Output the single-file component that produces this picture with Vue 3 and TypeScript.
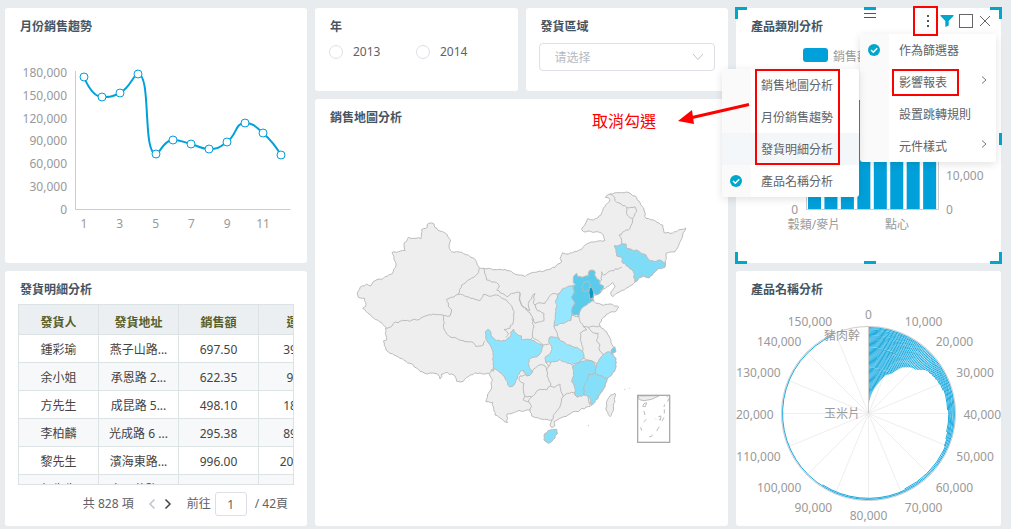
<script setup lang="ts">
import { ref } from 'vue'

type Pt = [number, number]

const months: Pt[] = [
  [84, 77], [102, 97], [120, 93], [138, 74], [156, 154], [173, 140],
  [191, 144], [209, 149], [227, 142], [245, 123], [263, 133], [281, 155],
]
const salesTicks = ['180,000', '150,000', '120,000', '90,000', '60,000', '30,000', '0']
const monthTicks = ['1', '3', '5', '7', '9', '11']

const between = (v: number, a: number, b: number) => Math.min(Math.max(v, Math.min(a, b)), Math.max(a, b))

// Smooth line whose control points never leave the span of their segment
function smoothLine(pts: Pt[]): string {
  const before: Pt[] = []
  const after: Pt[] = []
  pts.forEach((p, i) => {
    const prev = pts[i - 1]
    const next = pts[i + 1]
    if (!prev || !next) {
      before.push(p)
      after.push(p)
      return
    }
    const d0 = Math.hypot(p[0] - prev[0], p[1] - prev[1])
    const d1 = Math.hypot(next[0] - p[0], next[1] - p[1])
    const k = (0.5 * d1) / (d0 + d1)
    const a = [0, 1].map((n) => between(p[n] + (next[n] - prev[n]) * k, p[n], next[n]))
    const b = [0, 1].map((n) => between(p[n] - ((a[n] - p[n]) * d0) / d1, p[n], prev[n]))
    const c = [0, 1].map((n) => p[n] + ((p[n] - b[n]) * d1) / d0)
    before.push([b[0], b[1]])
    after.push([c[0], c[1]])
  })
  return pts
    .map((p, i) => (i === 0 ? `M${p}` : `C${after[i - 1]} ${before[i]} ${p}`))
    .join(' ')
}
const salesPath = smoothLine(months)

const columns = ['發貨人', '發貨地址', '銷售額', '運費']
const rows = [
  ['鍾彩瑜', '燕子山路...', '697.50', '39.92'],
  ['余小姐', '承恩路 2...', '622.35', '9.21'],
  ['方先生', '成昆路 5...', '498.10', '18.53'],
  ['李柏麟', '光成路 6 ...', '295.38', '89.16'],
  ['黎先生', '濱海東路...', '996.00', '208.58'],
  ['胡先生', '大明花路...', '320.00', '45.20'],
]

const year = ref('')
const area = ref('')
const page = ref('1')

// Map geometry
const parse = (s: string): Pt[] => s.trim().split(/\s+/).map((p) => p.split(',').map(Number) as Pt)

// Breaks long edges into small irregular steps; the same edge always gives the same steps
function rough(s: string, closed: boolean): string {
  const pts = parse(s)
  if (closed) pts.push(pts[0])
  let d = `M${pts[0]}`
  for (let i = 1; i < pts.length; i++) {
    const flip = pts[i - 1][0] > pts[i][0]
    const a = flip ? pts[i] : pts[i - 1]
    const b = flip ? pts[i - 1] : pts[i]
    const len = Math.hypot(b[0] - a[0], b[1] - a[1])
    const n = Math.max(1, Math.round(len / 7))
    const mid: Pt[] = []
    for (let j = 1; j < n; j++) {
      const h = Math.sin(a[0] * 12.9 + a[1] * 7.3 + b[0] * 3.1 + j * 41.7) * 4375.5
      const o = (h - Math.floor(h) - 0.5) * 5
      mid.push([
        Math.round(a[0] + ((b[0] - a[0]) * j) / n - ((b[1] - a[1]) / len) * o),
        Math.round(a[1] + ((b[1] - a[1]) * j) / n + ((b[0] - a[0]) / len) * o),
      ])
    }
    if (flip) mid.reverse()
    d += mid.map((m) => `L${m}`).join('') + `L${pts[i]}`
  }
  return closed ? d + 'Z' : d
}

const mainland = rough(
  `245,129 252,132 255,143 270,153 290,162 302,180 298,205 305,215 335,217 355,225 372,235 382,255 388,265
  402,265 435,269 465,268 490,280 525,290 550,277 585,272 615,262 635,246 630,235 638,218 655,222 695,208
  710,192 740,184 765,181 758,163 742,155 700,155 695,148 713,116 730,120 753,105 760,85 780,58 766,52
  780,42 800,38 830,36 855,48 870,68 882,90 888,115 910,120 938,135 942,158 960,160 980,155 1007,144
  998,165 988,190 975,215 948,220 946,250 944,262 925,265 910,280 898,293 880,288 868,292 855,306 840,318 810,335
  788,350 782,342 795,320 788,308 772,320 758,328 745,343 730,345 728,360 738,370 760,376 780,372
  807,382 800,392 780,397 760,412 748,430 750,438 770,455 780,475 790,500 797,515 785,522 798,535 798,560
  785,585 772,595 765,620 745,650 725,675 715,680 690,690 660,702 630,715 612,725 614,738 605,743 600,735
  606,720 575,718 545,708 540,690 530,690 500,695 472,701 472,728 460,722 435,705 430,680 428,667 408,665
  412,645 425,620 425,595 418,580 405,582 375,578 355,590 340,604 320,604 312,585 285,578 275,582 270,597
  262,582 225,580 205,568 180,550 150,535 120,520 108,510 100,483 110,480 106,460 108,442 95,428 65,410
  38,385 46,380 44,355 25,352 22,338 30,322 50,312 62,318 75,302 100,295 128,280 138,250 126,218 165,212
  162,195 175,172 213,176 215,148 232,142 235,130`,
  true,
)

const westBorders = [
  '388,265 382,282 355,300 335,315 325,343 290,358 295,375 305,390 300,408 280,406 250,402 225,408 200,420 165,422 130,430 120,442 108,445',
  '325,343 350,350 375,358 390,362 400,343 415,348 440,345 465,358 485,378 493,395 490,425 480,445 462,448 475,462 468,472',
  '402,265 410,300 440,308 448,318 440,330 470,350 485,340 510,338 508,360 515,378 530,390',
  '280,406 283,450 300,470 345,485 370,488 378,500 400,495 405,482',
  '430,575 425,568 418,580',
].map((s) => rough(s, false))

const northBorders = [
  '270,42 284,52 285,62 320,82 345,80 350,95 338,115 322,105 320,82',
  '338,115 330,145 297,165 305,180 305,190',
  '305,262 275,272 250,285 245,275 245,300 240,310',
].map((s) => rough(s, false))

const centralBorders = [
  '130,172 120,152 120,130',
  '136,178 145,186 158,200 160,235 158,262 152,268',
  '130,172 150,182 145,160 165,130 160,155 165,165 172,182 192,190 192,212 165,220 160,205',
  '165,165 180,158 195,160 215,132 238,130',
  '158,262 190,285 208,282',
  '222,230 232,250 240,272',
  '297,197 300,215 310,230 325,232 340,228 360,228',
  '272,212 276,195 297,200',
  '310,230 320,240 300,250 302,272 308,290 308,305',
  '325,232 335,245 355,250 350,268 360,285 358,300 370,312 360,325',
  '312,325 320,330 340,335 350,340',
  '198,338 206,350 200,362 195,348 178,345 160,358 152,372',
  '150,375 120,378 118,392 132,400 130,420 135,438 155,440',
  '200,362 205,385 212,408 200,420 175,420 155,440 145,455 155,470 150,480',
  '135,438 130,450 148,456',
  '206,350 212,336',
  '212,408 225,412 240,402 243,425 250,440 262,430 280,428 292,442',
  '248,440 240,470 225,490 216,510',
  '310,435 325,440 330,466',
].map((s) => rough(s, false))

const jilin = rough(
  `283,197 300,195 305,190 318,192 320,205 355,212 372,222 388,242 405,245 415,240 436,250 434,262 415,265
  400,280 388,293 370,288 358,292 345,306 340,275 325,260 305,245 305,232 290,228`,
  true,
)

const provinces = [
  {
    name: 'sichuan', fill: '#8de4fe',
    d: `16,245 25,238 33,250 33,258 50,272 75,272 92,260 92,247 100,238 110,252 125,258 125,270 150,268 190,285
    185,302 172,320 147,328 145,340 152,358 158,365 150,376 140,378 130,360 120,365 108,390 102,405 88,410
    75,385 65,370 45,355 40,362 40,320 35,295 20,270`,
  },
  {
    name: 'shanxi', fill: '#95e7ff',
    d: '283,104 278,115 283,125 275,140 285,160 277,172 276,195 272,212 245,220 222,230 226,200 230,170 228,150 238,130 250,115 268,108',
  },
  {
    name: 'hubei', fill: '#95e7ff',
    d: '208,262 230,262 240,272 270,285 290,292 308,305 312,325 300,335 275,345 250,335 240,328 225,335 198,338 195,322 213,305 215,290 208,280',
  },
  {
    name: 'jiangxi', fill: '#85dff9',
    d: '278,348 300,335 320,330 340,335 350,352 345,370 325,375 322,392 312,410 310,435 292,442 285,435 283,410 275,395 280,370',
  },
  {
    name: 'zhejiang', fill: '#8de4fe',
    d: '350,340 360,325 375,310 385,305 395,312 408,325 408,350 395,375 382,385 365,378 345,370 350,352',
  },
  {
    name: 'fujian', fill: '#85dff9',
    d: '345,370 365,378 382,385 375,410 355,440 335,465 325,440 310,435 312,410 322,392 325,375',
  },
  { name: 'shanghai', fill: '#6bd0ee', d: '395,298 404,290 408,305 395,312 393,303' },
  { name: 'hainan', fill: '#85dff9', d: '195,550 210,540 230,538 232,552 215,575 205,580 192,570' },
  {
    name: 'hebei', fill: '#5acbea',
    d: `280,82 290,70 293,80 325,78 328,62 343,62 347,80 358,90 358,100 371,108 360,128 348,134 340,128 338,145
    342,152 320,165 305,175 297,197 276,192 277,172 285,160 275,140 283,125 280,110 287,103 280,98`,
  },
  { name: 'beijing', fill: '#5acbea', d: '305,110 312,97 325,93 332,103 328,112 333,120 315,125 308,122' },
  { name: 'tianjin', fill: '#0b98c5', d: '334,110 338,118 341,130 340,143 328,145 327,125' },
  { name: 'taiwan', fill: '#eee', d: '405,430 405,455 395,490 390,500 378,480 380,455 392,435' },
].map((p) => ({ ...p, d: rough(p.d, true) }))

const seaMarks = 'M380,278l-8,3l-4,8l8,1zM372,303l3,12M379,328l-8,8M362,352l3,10M398,374l-4,6h-6M418,350l-8,13M434,283l-2,8M433,298v12M444,262l-6,-6M446,266l-3,9M432,322l-6,11M415,320l8,-2l-2,12l-4,-3M406,326l2,2'

// Radial chart
const cx = 868.5
const cy = 413.5
const outline: Pt[] = [
  [0, 0], [12, 3], [20, 9], [32, 18], [42, 24], [46, 30], [57, 36], [63, 43], [65, 48], [72, 53],
  [76, 64], [78, 72], [79, 84], [80, 102], [83, 115], [84, 172], [85, 222], [86, 343], [90, 343],
]
const angleAt = (r: number): number => {
  const i = outline.findIndex((p) => p[0] > r)
  const [r0, a0] = outline[i - 1]
  const [r1, a1] = outline[i]
  return a0 + ((a1 - a0) * (r - r0)) / (r1 - r0)
}
const ringCount = 77
const rings = Array.from({ length: ringCount }, (_, i) => {
  const r = ((i + 0.5) * 86.5) / ringCount
  const deg = angleAt(r)
  const t = (deg * Math.PI) / 180
  return `M${cx},${cy - r}A${r},${r} 0 ${deg > 180 ? 1 : 0} 1 ${cx + r * Math.sin(t)},${cy - r * Math.cos(t)}`
})
const spokes = Array.from({ length: 16 }, (_, i) => {
  const t = (i * Math.PI) / 8
  const s = Math.sin(t)
  const c = Math.cos(t)
  return {
    x: cx + 86.5 * s,
    y: cy - 86.5 * c,
    tx: cx + 95 * s,
    ty: cy - 95 * c + 5 + (c > 0.3 ? -5 : c < -0.3 ? 6 : 0),
    anchor: Math.abs(s) < 0.1 ? 'middle' : s > 0 ? 'start' : 'end',
    label: i === 0 ? '0' : `${i}0,000`,
  }
})

const bars = Array.from({ length: 8 }, (_, i) => 808 + i * 16.45)

const menu = [
  { label: '作為篩選器', checked: true, more: false },
  { label: '影響報表', checked: false, more: true },
  { label: '設置跳轉規則', checked: false, more: false },
  { label: '元件樣式', checked: false, more: true },
]
const submenu = [
  { label: '銷售地圖分析', checked: false },
  { label: '月份銷售趨勢', checked: false },
  { label: '發貨明細分析', checked: false },
  { label: '產品名稱分析', checked: true },
]
const handles = ['tl', 'tm', 'tr', 'ml', 'mr', 'bl', 'bm', 'br']
</script>

<template>
  <main class="board">
    <div class="column">
      <section class="card">
        <h2>月份銷售趨勢</h2>
        <svg class="chart" viewBox="5 34 302 229" role="img" aria-label="月份銷售趨勢">
          <path class="axis" d="M75.500,71V209.500H290.500" />
          <text v-for="(t, i) in salesTicks" :key="t" x="67" :y="77 + i * 22.8" text-anchor="end">{{ t }}</text>
          <text v-for="(t, i) in monthTicks" :key="t" :x="84 + i * 35.8" y="228" text-anchor="middle">{{ t }}</text>
          <path class="line" :d="salesPath" />
          <circle v-for="(p, i) in months" :key="i" class="dot" :cx="p[0]" :cy="p[1]" r="4" />
        </svg>
      </section>

      <section class="card">
        <h2>發貨明細分析</h2>
        <div class="table-wrap">
          <table>
            <thead>
              <tr><th v-for="c in columns" :key="c" scope="col">{{ c }}</th></tr>
            </thead>
            <tbody>
              <tr v-for="r in rows" :key="r[0]">
                <td v-for="(c, i) in r" :key="i">{{ c }}</td>
              </tr>
            </tbody>
          </table>
        </div>
        <nav class="pager" aria-label="分頁">
          <span class="total">共 828 項</span>
          <button type="button" class="step off" aria-label="上一頁" disabled>
            <svg viewBox="0 0 8 12" width="8" height="12"><path d="M6.500,1.500L2,6L6.500,10.500" /></svg>
          </button>
          <button type="button" class="step" aria-label="下一頁">
            <svg viewBox="0 0 8 12" width="8" height="12"><path d="M1.500,1.500L6,6L1.500,10.500" /></svg>
          </button>
          <label for="page">前往</label>
          <input id="page" v-model="page" type="text" />
          <span>/ 42頁</span>
        </nav>
      </section>
    </div>

    <div class="column middle">
      <div class="filters">
        <section class="card">
          <h2>年</h2>
          <div class="radios">
            <label v-for="y in ['2013', '2014']" :key="y">
              <input v-model="year" type="radio" name="year" :value="y" />{{ y }}
            </label>
          </div>
        </section>
        <section class="card">
          <h2 id="area-title">發貨區域</h2>
          <div class="select">
            <select v-model="area" aria-labelledby="area-title" lang="zh-CN">
              <option value="">请选择</option>
            </select>
            <svg viewBox="0 0 12 8" width="12" height="8"><path d="M1,1L6,6.500L11,1" /></svg>
          </div>
        </section>
      </div>

      <section class="card map-card">
        <h2>銷售地圖分析</h2>
        <svg class="chart map" viewBox="315 125 413 401" role="img" aria-label="銷售地圖分析">
          <g transform="translate(350 180) scale(0.33333)">
            <path :d="mainland" fill="#eee" />
            <path v-for="(d, i) in westBorders" :key="i" :d="d" />
            <g transform="translate(510 0)">
              <path v-for="(d, i) in northBorders" :key="i" :d="d" />
              <path :d="jilin" fill="#7fdcf7" />
            </g>
            <g transform="translate(390 210)">
              <path v-for="(d, i) in centralBorders" :key="i" :d="d" />
              <path v-for="p in provinces" :key="p.name" :d="p.d" :fill="p.fill" />
            </g>
            <g transform="translate(510 390)">
              <path d="M353,258L358,269L372,272L395,268L418,257Z" fill="#eee" />
              <rect class="sea" x="353" y="256" width="96" height="141" />
              <path :d="seaMarks" />
              <path d="M313,238h3M328,235h2M204,347h3M301,133h1" />
            </g>
          </g>
        </svg>
      </section>
    </div>

    <div class="column">
      <section class="card selected">
        <header>
          <h2>產品類別分析</h2>
          <div class="tools">
            <button type="button" class="flagged" aria-label="更多">
              <svg viewBox="0 0 14 14" width="14" height="14"><path class="solid" d="M6,1h2v2h-2zM6,6h2v2h-2zM6,11h2v2h-2z" /></svg>
            </button>
            <button type="button" aria-label="篩選">
              <svg viewBox="0 0 14 14" width="14" height="14"><path class="funnel" d="M0.500,1H13.500V2L8.700,7V11.500L5.300,13V7L0.500,2Z" /></svg>
            </button>
            <button type="button" aria-label="最大化">
              <svg viewBox="0 0 14 14" width="14" height="14"><rect x="0.500" y="0.500" width="13" height="13" /></svg>
            </button>
            <button type="button" aria-label="關閉">
              <svg viewBox="0 0 14 14" width="14" height="14"><path d="M2,2L12,12M12,2L2,12" /></svg>
            </button>
          </div>
        </header>
        <svg class="chart" viewBox="736 34 265 229" role="img" aria-label="產品類別分析">
          <rect class="bar" x="803" y="48" width="25" height="14" rx="3" />
          <text x="833" y="61">銷售額</text>
          <rect v-for="x in bars" :key="x" class="bar" :x="x" y="100" width="13" height="109" />
          <path class="axis" d="M806.500,100V209.500H938.500V100" />
          <text x="798" y="214" text-anchor="end">0</text>
          <text x="946" y="214">0</text>
          <text x="946" y="180">10,000</text>
          <text x="814" y="229" text-anchor="middle">穀類/麥片</text>
          <text x="897" y="229" text-anchor="middle">點心</text>
        </svg>
        <i v-for="h in handles" :key="h" class="handle" :class="h"></i>
        <i class="grip"></i>

        <ul class="menu main-menu">
          <li v-for="m in menu" :key="m.label">
            <button type="button">
              <span class="mark">
                <svg v-if="m.checked" viewBox="0 0 12 12" width="12" height="12"><circle cx="6" cy="6" r="6" /><path d="M3,6L5.300,8.300L9.200,4.200" /></svg>
              </span>
              <span class="name" :class="{ boxed: m.label === '影響報表' }">{{ m.label }}</span>
              <svg v-if="m.more" class="more" viewBox="0 0 6 8" width="6" height="8"><path d="M1,0.500L5,4L1,7.500" /></svg>
            </button>
          </li>
        </ul>

        <ul class="menu sub-menu">
          <li v-for="(m, i) in submenu" :key="m.label">
            <button type="button" :class="{ hover: i === 2 }">
              <span class="mark">
                <svg v-if="m.checked" viewBox="0 0 12 12" width="12" height="12"><circle cx="6" cy="6" r="6" /><path d="M3,6L5.300,8.300L9.200,4.200" /></svg>
              </span>
              <span class="name">{{ m.label }}</span>
            </button>
          </li>
        </ul>
        <div class="frame"></div>
        <div class="callout">
          <span>取消勾選</span>
          <svg viewBox="0 0 74 24" width="74" height="24"><path class="shaft" d="M13,17L72,3.500" /><path class="tip" d="M1,20L15,9L17,23Z" /></svg>
        </div>
      </section>

      <section class="card">
        <h2>產品名稱分析</h2>
        <svg class="chart" viewBox="736 297 265 229" role="img" aria-label="產品名稱分析">
          <line v-for="s in spokes" :key="s.label" class="spoke" :x1="cx" :y1="cy" :x2="s.x" :y2="s.y" />
          <circle class="rim" :cx="cx" :cy="cy" r="87" />
          <path v-for="(d, i) in rings" :key="i" class="ring" :d="d" />
          <path class="axis" :d="`M${cx},${cy}V326`" />
          <text v-for="s in spokes" :key="s.label" :x="s.tx" :y="s.ty" :text-anchor="s.anchor">{{ s.label }}</text>
          <text x="860" y="340" text-anchor="end">豬肉幹</text>
          <text x="860" y="418" text-anchor="end">玉米片</text>
        </svg>
      </section>
    </div>
  </main>
</template>

<style>
body {
  margin: 0;
  background: #e8ecef;
}
</style>

<style scoped>
.board {
  box-sizing: border-box;
  display: grid;
  grid-template-columns: 302fr 413fr 265fr;
  gap: 8px;
  height: 100vh;
  padding: 8px 10px 3px 5px;
  background: #e8ecef;
  color: #606266;
  font: 12px/16px "Noto Sans", "Noto Sans CJK TC", sans-serif;
}
.column {
  display: grid;
  grid-template-rows: repeat(2, minmax(0, 1fr));
  grid-template-columns: minmax(0, 1fr);
  gap: 8px;
  min-width: 0;
  min-height: 0;
}
.middle {
  grid-template-rows: 83px minmax(0, 1fr);
}
.filters {
  display: grid;
  grid-template-columns: 1fr 1fr;
  gap: 8px;
}
.card {
  display: flex;
  flex-direction: column;
  min-width: 0;
  min-height: 0;
  border-radius: 3px;
  background: #fff;
}
h2 {
  flex: none;
  margin: 12px 15px 0;
  color: #465461;
  font-size: 12px;
  font-weight: 600;
  line-height: 14px;
}
button {
  padding: 0;
  border: 0;
  background: none;
  color: inherit;
  font: inherit;
}
svg {
  display: block;
  fill: none;
}
.chart {
  flex: 1 1 0;
  width: 100%;
  min-height: 0;
}
.chart text {
  fill: #999;
  font-size: 12px;
}
.axis {
  stroke: #ccc;
}
.line {
  stroke: #00a0db;
  stroke-width: 2;
}
.dot {
  fill: #fff;
  stroke: #00a0db;
}
.bar {
  fill: #00a0db;
}
.spoke {
  stroke: #eee;
}
.rim {
  stroke: #ccc;
}
.ring {
  stroke: #00a0db;
  stroke-width: 0.9;
}
.map path {
  stroke: #bbb;
  stroke-width: 3;
  stroke-linejoin: round;
}
.map .sea {
  stroke: #aaa;
  stroke-width: 4;
}

.table-wrap {
  flex: 1 1 0;
  min-height: 0;
  margin: 7px 13px 0;
  overflow: hidden;
  border: 1px solid #dbe3e5;
}
table {
  width: 320px;
  table-layout: fixed;
  border-collapse: separate;
  border-spacing: 0;
}
th,
td {
  box-sizing: border-box;
  height: 28px;
  padding: 2px 0 0;
  border-right: 1px solid #dbe3e5;
  border-bottom: 1px solid #dbe3e5;
  color: #444;
  text-align: center;
  white-space: nowrap;
}
th {
  height: 30px;
  padding-top: 6px;
  background: #ebeff2;
  color: #565f2e;
  font-weight: 600;
}
tbody tr:nth-child(even) {
  background: #f6f8fa;
}
.pager {
  display: flex;
  align-items: center;
  justify-content: flex-end;
  height: 38px;
  padding: 0 19px 3px 0;
}
.step {
  width: 16px;
  height: 16px;
  padding-left: 4px;
}
.total {
  margin-right: 10px;
}
.step path {
  stroke: #444;
  stroke-width: 1.5;
}
.step.off path {
  stroke: #c0c4cc;
}
.pager label {
  margin: 0 4px 0 11px;
}
.pager input {
  box-sizing: border-box;
  width: 32px;
  height: 24px;
  margin-right: 8px;
  padding: 0;
  border: 1px solid #dcdfe6;
  border-radius: 3px;
  background: #fff;
  color: #606266;
  font: inherit;
  text-align: center;
}

.radios {
  display: grid;
  grid-template-columns: 87px 87px;
  margin: 10px 14px 0;
}
.radios label {
  display: flex;
  gap: 10px;
  align-items: center;
}
.radios input {
  box-sizing: border-box;
  width: 14px;
  height: 14px;
  margin: 0;
  appearance: none;
  border: 1px solid #dcdfe6;
  border-radius: 50%;
  background: #fff;
}
.select {
  position: relative;
  margin: 9px 13px 0;
}
.select select {
  box-sizing: border-box;
  display: block;
  width: 100%;
  height: 28px;
  padding: 2px 15px 0;
  appearance: none;
  border: 1px solid #dcdfe6;
  border-radius: 4px;
  background: #fff;
  color: #b4bac4;
  font: 12px/16px "Noto Sans", "Noto Sans CJK SC", sans-serif;
}
.select svg {
  position: absolute;
  top: 10px;
  right: 11px;
  stroke: #c0c4cc;
  pointer-events: none;
}

.selected {
  position: relative;
  z-index: 1;
}
.selected header {
  display: flex;
  justify-content: space-between;
  height: 26px;
}
.tools {
  display: flex;
  align-items: center;
  padding-right: 6px;
}
.tools button {
  position: relative;
  width: 19px;
  padding: 0 2px;
}
.tools svg {
  stroke: #666;
}
.tools .solid {
  fill: #555;
  stroke: none;
}
.tools .funnel {
  fill: #00a7cc;
  stroke: none;
}
.flagged::after {
  content: "";
  position: absolute;
  z-index: 4;
  inset: -8px 0 -8px -6px;
  border: 2px solid #f00;
}
.handle {
  position: absolute;
  box-sizing: border-box;
  width: 12px;
  height: 12px;
  border: 0 solid #00a7cc;
}
.tl, .tm, .tr {
  top: -1px;
  border-top-width: 3px;
}
.bl, .bm, .br {
  bottom: -1px;
  border-bottom-width: 3px;
}
.tl, .ml, .bl {
  left: -1px;
  border-left-width: 3px;
}
.tr, .mr, .br {
  right: -1px;
  border-right-width: 3px;
}
.tm, .bm, .grip {
  left: calc(50% - 5px);
}
.ml, .mr {
  top: calc(50% - 3px);
}
.grip {
  position: absolute;
  top: 5px;
  box-sizing: border-box;
  width: 12px;
  height: 5px;
  border: solid #555;
  border-width: 1px 0;
}

.menu {
  position: absolute;
  width: 137px;
  margin: 0;
  padding: 0;
  border-radius: 3px;
  background: linear-gradient(90deg, #fafafa 29px, #fff 29px);
  box-shadow: 0 2px 8px rgba(0, 0, 0, 0.12);
  list-style: none;
}
.main-menu {
  z-index: 2;
  top: 26px;
  right: 5px;
  width: 136px;
}
.sub-menu {
  z-index: 3;
  top: 61px;
  right: 142px;
}
.menu button {
  display: flex;
  align-items: center;
  width: 100%;
  height: 32px;
  text-align: left;
}
.menu .hover {
  background: #f3f7fa;
}
.mark {
  width: 29px;
  padding-left: 8px;
  box-sizing: border-box;
}
.mark circle {
  fill: #00a7cc;
}
.mark path {
  stroke: #fff;
  stroke-width: 1.5;
}
.name {
  position: relative;
  margin-left: 10px;
  padding-top: 2px;
}
.boxed::after {
  content: "";
  position: absolute;
  inset: -4px -12px -5px -7px;
  border: 2px solid #f00;
}
.more {
  margin: 0 9px 4px auto;
  stroke: #777;
}
.frame {
  position: absolute;
  z-index: 4;
  top: 61px;
  right: 161px;
  box-sizing: border-box;
  width: 85px;
  height: 96px;
  border: 2px solid #f00;
}
.callout {
  position: absolute;
  z-index: 4;
  top: 93px;
  right: 250px;
  display: flex;
  gap: 21px;
  width: 159px;
  color: #f00;
  font-size: 16px;
  line-height: 40px;
  white-space: nowrap;
}
.shaft {
  stroke: #f00;
  stroke-width: 3;
}
.tip {
  fill: #f00;
}
</style>
